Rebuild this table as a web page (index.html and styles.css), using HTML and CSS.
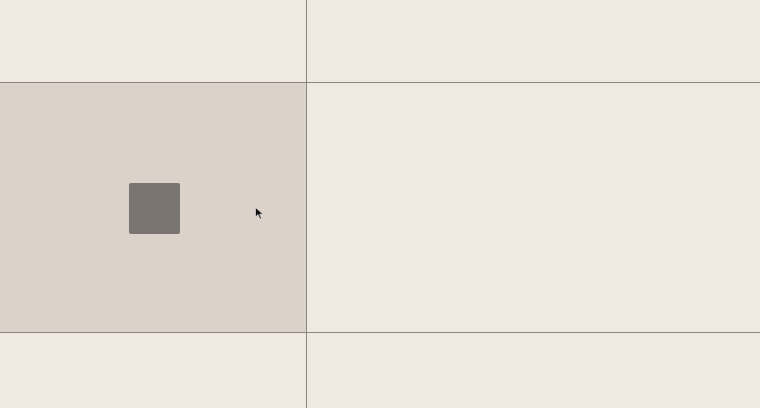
FILE: index.html
```html
<!DOCTYPE html>
<html>
<head>
<meta charset="utf-8">
<link rel="stylesheet" href="styles.css">
</head>
<body>
<div class="grid">
  <div class="cell"></div>
  <div class="cell"></div>
  <div class="cell active"><div class="tile"></div></div>
  <div class="cell"></div>
  <div class="cell"></div>
  <div class="cell"></div>
</div>
<svg class="cursor" width="10" height="14" viewBox="0 0 10 14"><path d="M0.5 0.5 L0.5 10 L3 7.6 L5 12 L6.5 11.3 L4.6 7.2 L8 7.2 Z" fill="#111" stroke="#eee" stroke-width="0.6"/></svg>
</body>
</html>
```
FILE: styles.css
```css
html, body { margin: 0; padding: 0; }
body { width: 760px; height: 408px; overflow: hidden; position: relative; background: #efe9e2; }
.grid {
  display: grid;
  grid-template-columns: 306px 1fr;
  grid-template-rows: 82px 249px 1fr;
  gap: 1px;
  height: 408px;
  background: #8a8680;
}
.cell { background: #efe9e2; }
.cell.active { background: #dbd3c9; display: flex; align-items: center; padding-left: 129px; }
.tile { width: 51px; height: 51px; background: #7a7570; border-radius: 2px; margin-top: 2px; }
.cursor { position: absolute; left: 255px; top: 207px; }
```
